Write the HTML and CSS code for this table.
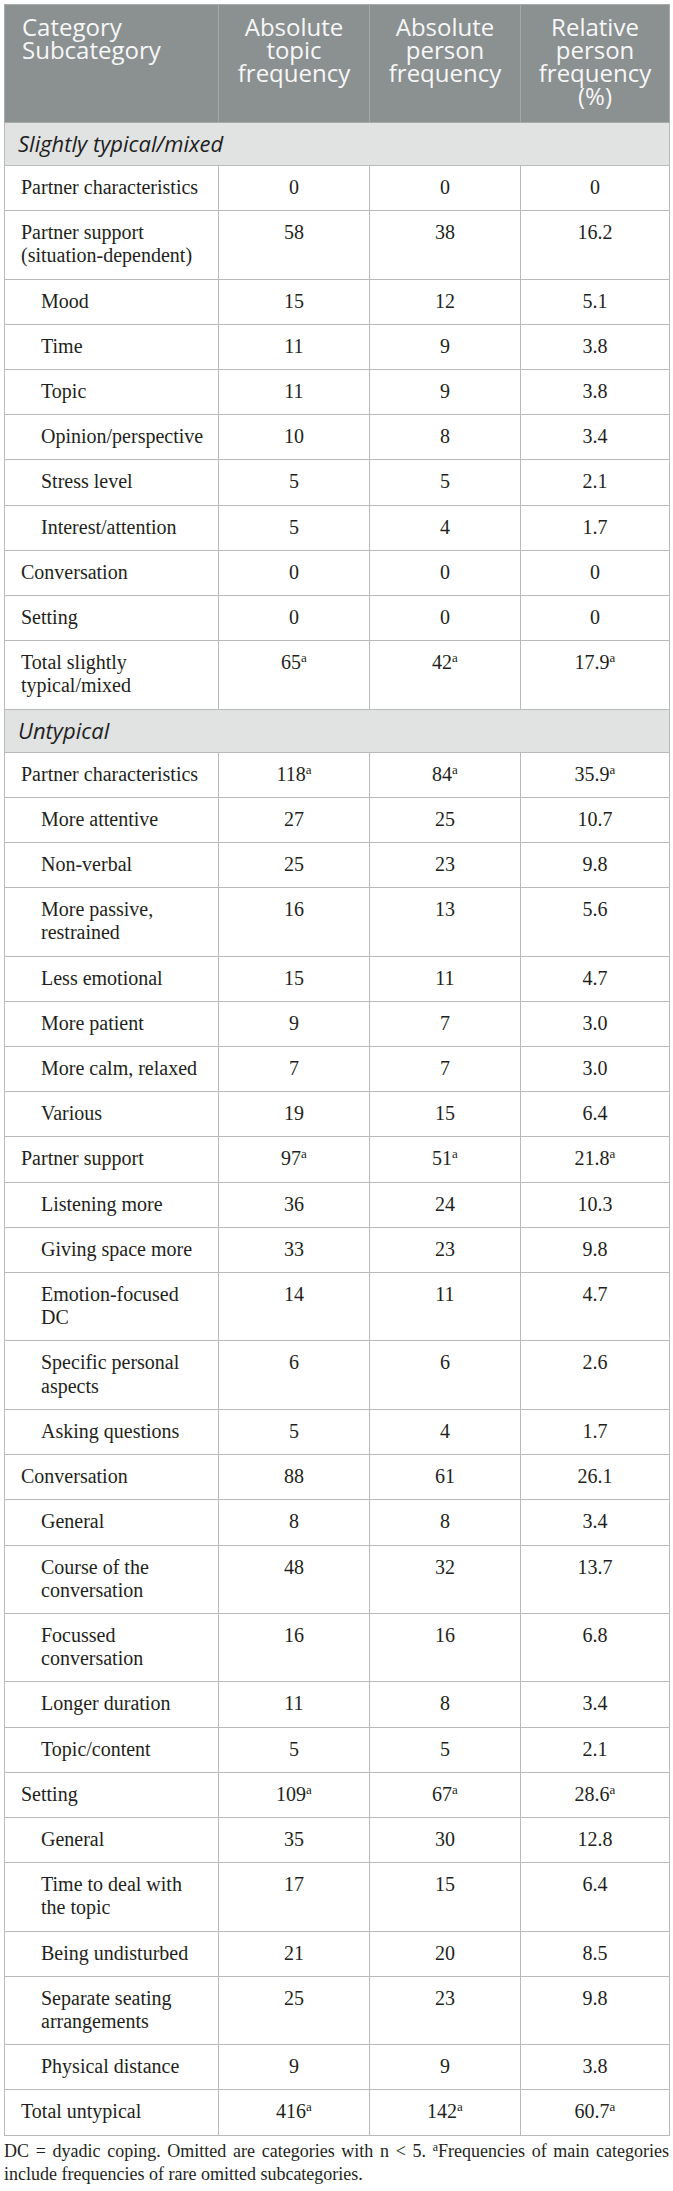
FILE: index.html
```html
<!DOCTYPE html>
<html lang="en">
<head>
<meta charset="utf-8">
<title>Table</title>
<link rel="stylesheet" href="styles.css">
</head>
<body>
<div class="wrap">
<table class="tbl">
<colgroup>
<col class="c1"><col class="c2"><col class="c3"><col class="c4">
</colgroup>
<thead>
<tr>
<th class="h-left">Category<br>Subcategory</th>
<th>Absolute<br>topic<br>frequency</th>
<th>Absolute<br>person<br>frequency</th>
<th>Relative<br>person<br>frequency<br>(%)</th>
</tr>
</thead>
<tbody>
<tr class="sec"><td colspan="4">Slightly typical/mixed</td></tr>
<tr><td>Partner characteristics</td><td>0</td><td>0</td><td>0</td></tr>
<tr><td>Partner support<br>(situation-dependent)</td><td>58</td><td>38</td><td>16.2</td></tr>
<tr><td class="sub">Mood</td><td>15</td><td>12</td><td>5.1</td></tr>
<tr><td class="sub">Time</td><td>11</td><td>9</td><td>3.8</td></tr>
<tr><td class="sub">Topic</td><td>11</td><td>9</td><td>3.8</td></tr>
<tr><td class="sub">Opinion/perspective</td><td>10</td><td>8</td><td>3.4</td></tr>
<tr><td class="sub">Stress level</td><td>5</td><td>5</td><td>2.1</td></tr>
<tr><td class="sub">Interest/attention</td><td>5</td><td>4</td><td>1.7</td></tr>
<tr><td>Conversation</td><td>0</td><td>0</td><td>0</td></tr>
<tr><td>Setting</td><td>0</td><td>0</td><td>0</td></tr>
<tr><td>Total slightly<br>typical/mixed</td><td>65<sup>a</sup></td><td>42<sup>a</sup></td><td>17.9<sup>a</sup></td></tr>
<tr class="sec"><td colspan="4">Untypical</td></tr>
<tr><td>Partner characteristics</td><td>118<sup>a</sup></td><td>84<sup>a</sup></td><td>35.9<sup>a</sup></td></tr>
<tr><td class="sub">More attentive</td><td>27</td><td>25</td><td>10.7</td></tr>
<tr><td class="sub">Non-verbal</td><td>25</td><td>23</td><td>9.8</td></tr>
<tr><td class="sub">More passive,<br>restrained</td><td>16</td><td>13</td><td>5.6</td></tr>
<tr><td class="sub">Less emotional</td><td>15</td><td>11</td><td>4.7</td></tr>
<tr><td class="sub">More patient</td><td>9</td><td>7</td><td>3.0</td></tr>
<tr><td class="sub">More calm, relaxed</td><td>7</td><td>7</td><td>3.0</td></tr>
<tr><td class="sub">Various</td><td>19</td><td>15</td><td>6.4</td></tr>
<tr><td>Partner support</td><td>97<sup>a</sup></td><td>51<sup>a</sup></td><td>21.8<sup>a</sup></td></tr>
<tr><td class="sub">Listening more</td><td>36</td><td>24</td><td>10.3</td></tr>
<tr><td class="sub">Giving space more</td><td>33</td><td>23</td><td>9.8</td></tr>
<tr><td class="sub">Emotion-focused<br>DC</td><td>14</td><td>11</td><td>4.7</td></tr>
<tr><td class="sub">Specific personal<br>aspects</td><td>6</td><td>6</td><td>2.6</td></tr>
<tr><td class="sub">Asking questions</td><td>5</td><td>4</td><td>1.7</td></tr>
<tr><td>Conversation</td><td>88</td><td>61</td><td>26.1</td></tr>
<tr><td class="sub">General</td><td>8</td><td>8</td><td>3.4</td></tr>
<tr><td class="sub">Course of the<br>conversation</td><td>48</td><td>32</td><td>13.7</td></tr>
<tr><td class="sub">Focussed<br>conversation</td><td>16</td><td>16</td><td>6.8</td></tr>
<tr><td class="sub">Longer duration</td><td>11</td><td>8</td><td>3.4</td></tr>
<tr><td class="sub">Topic/content</td><td>5</td><td>5</td><td>2.1</td></tr>
<tr><td>Setting</td><td>109<sup>a</sup></td><td>67<sup>a</sup></td><td>28.6<sup>a</sup></td></tr>
<tr><td class="sub">General</td><td>35</td><td>30</td><td>12.8</td></tr>
<tr><td class="sub">Time to deal with<br>the topic</td><td>17</td><td>15</td><td>6.4</td></tr>
<tr><td class="sub">Being undisturbed</td><td>21</td><td>20</td><td>8.5</td></tr>
<tr><td class="sub">Separate seating<br>arrangements</td><td>25</td><td>23</td><td>9.8</td></tr>
<tr><td class="sub">Physical distance</td><td>9</td><td>9</td><td>3.8</td></tr>
<tr><td>Total untypical</td><td>416<sup>a</sup></td><td>142<sup>a</sup></td><td>60.7<sup>a</sup></td></tr>
</tbody>
</table>
<p class="note">DC = dyadic coping. Omitted are categories with n &lt; 5. <sup>a</sup>Frequencies of main categories include frequencies of rare omitted subcategories.</p>
</div>
</body>
</html>
```

FILE: styles.css
```css
html, body {
  margin: 0;
  padding: 0;
  background: #ffffff;
}

.wrap {
  padding: 4px 4px 0 4px;
}

.tbl {
  width: 665px;
  border-collapse: collapse;
  table-layout: fixed;
  border: 1px solid #a9aaaa;
  font-family: "Liberation Serif", "Times New Roman", serif;
  font-size: 20px;
  line-height: 23.2px;
  color: #231f20;
}

.c1 { width: 214px; }
.c2 { width: 151px; }
.c3 { width: 151px; }
.c4 { width: 149px; }

.tbl thead th {
  background: #8b9091;
  color: #f7f7f7;
  font-family: "Open Sans", "Noto Sans", sans-serif;
  font-weight: 400;
  font-size: 24px;
  line-height: 23px;
  text-align: center;
  vertical-align: top;
  padding: 10px 6px 15px 6px;
  border-left: 1px solid #a3a7a8;
  border-bottom: 1px solid #a9aaaa;
}

.tbl thead th.h-left {
  text-align: left;
  padding-left: 17px;
  border-left: none;
}

.tbl td {
  text-align: center;
  vertical-align: top;
  padding: 10px 6px 11px 6px;
  border: 1px solid #b9baba;
}

.tbl td:first-child {
  text-align: left;
  padding-left: 16px;
}

.tbl td.sub {
  padding-left: 36px;
}

.tbl tr.sec td {
  background: #e1e3e2;
  font-family: "Open Sans", "Noto Sans", sans-serif;
  font-style: italic;
  font-size: 22px;
  line-height: 23px;
  padding: 9px 6px 10px 13px;
  color: #1e1e1e;
  text-align: left;
}

.tbl sup {
  font-size: 13px;
  line-height: 0;
  vertical-align: 7px;
}

.note {
  margin: 4px 0 0 0;
  font-family: "Liberation Serif", "Times New Roman", serif;
  font-size: 18px;
  line-height: 23px;
  color: #231f20;
  text-align: justify;
  width: 665px;
}

.note sup {
  font-size: 12px;
  line-height: 0;
  vertical-align: 6px;
}
```
